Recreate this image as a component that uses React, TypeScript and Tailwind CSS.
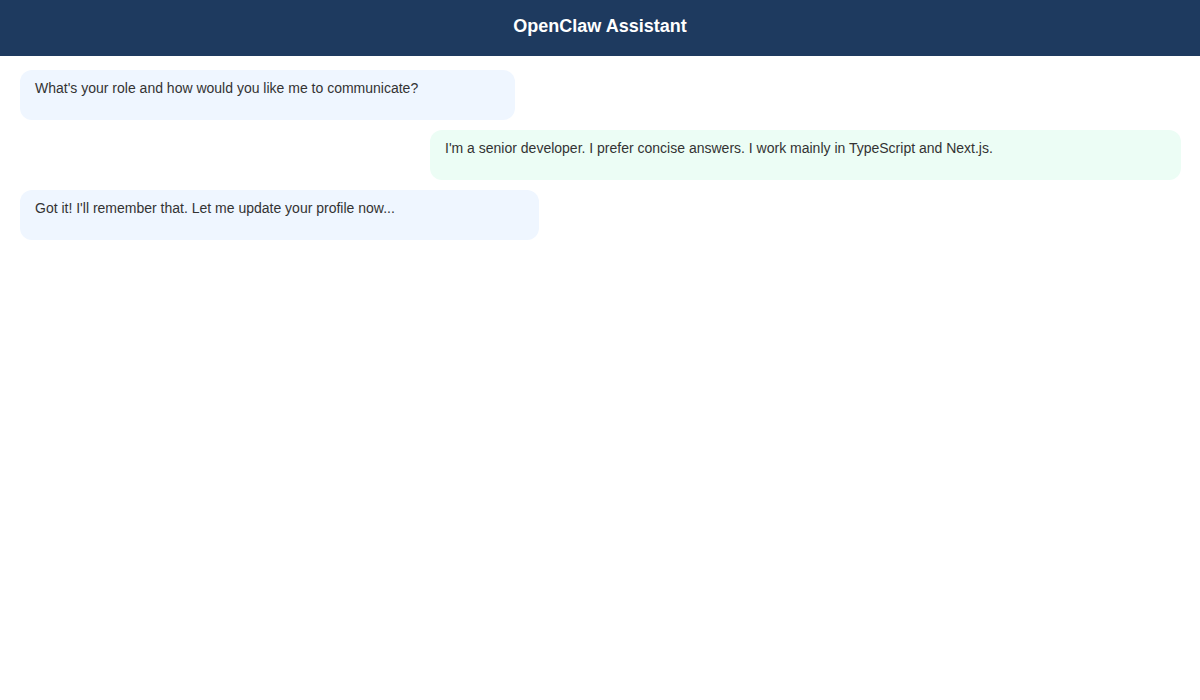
export default function App() {
  const msgs = [
    { u: false, w: "w-[495px]", t: "What's your role and how would you like me to communicate?" },
    { u: true, w: "w-[751px]", t: "I'm a senior developer. I prefer concise answers. I work mainly in TypeScript and Next.js." },
    { u: false, w: "w-[519px]", t: "Got it! I'll remember that. Let me update your profile now..." },
  ];
  return (
    <div className="w-[1200px] h-[700px] bg-white" style={{ fontFamily: '"Liberation Sans", Arial, sans-serif' }}>
      <div className="h-[56px] bg-[#1e3a5f] flex items-center justify-center text-white font-bold text-[18px] pb-[4px]">OpenClaw Assistant</div>
      <div className="flex flex-col gap-[10px] px-[20px] pt-[14px]">
        {msgs.map((m, i) => (
          <div key={i} className={`${m.w} h-[50px] rounded-[12px] px-[15px] pt-[8px] text-[14px] leading-[20px] text-[#333] ${m.u ? "self-end bg-[#ecfdf5] mr-[-1px]" : "self-start bg-[#eff6ff]"}`}>{m.t}</div>
        ))}
      </div>
    </div>
  );
}
